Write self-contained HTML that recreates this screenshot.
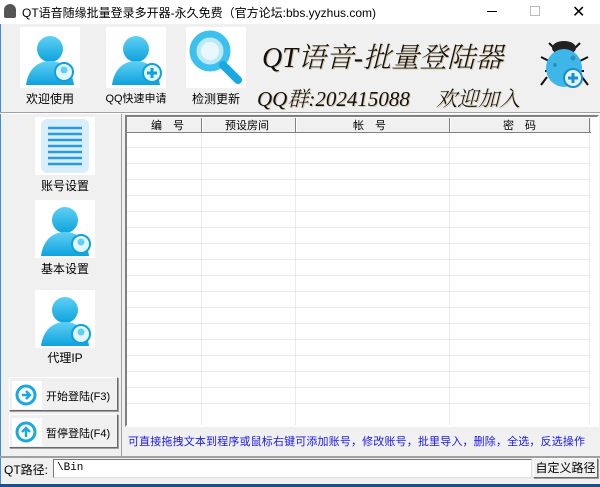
<!DOCTYPE html><html><head><meta charset="utf-8"><style>
*{margin:0;padding:0;box-sizing:border-box}
body{width:600px;height:487px;background:#f0f0f0;font-family:"Liberation Sans","Noto Sans CJK SC",sans-serif;font-size:12px;position:relative;overflow:hidden;color:#000}
.a{position:absolute}
.box{position:absolute;background:#fff}
.lbl{position:absolute;font-size:12px;text-align:center;white-space:nowrap}
.grid{position:absolute;left:125px;top:115px;width:474px;height:312px;background:#fff;border:2px solid #a0a0a0;border-right-color:#fff;border-bottom-color:#fff;border-top-color:#808080;border-left-color:#808080}
.btn{position:absolute;background:#f0f0f0;border:1px solid #fff;border-right-color:#6a6a6a;border-bottom-color:#6a6a6a;box-shadow:1px 1px 0 #a0a0a0}
.big{font-family:'Liberation Serif','Noto Serif CJK SC',serif;font-style:italic;font-weight:300;color:#111;text-shadow:1px 1px 0 rgba(200,160,96,.5);white-space:nowrap}
</style></head><body>
<svg width="0" height="0" style="position:absolute"><defs>
<linearGradient id="g" x1="0" y1="0" x2="0" y2="1"><stop offset="0" stop-color="#5fd0f5"/><stop offset="1" stop-color="#0ea2dc"/></linearGradient>
<g id="person"><circle cx="28" cy="20" r="13" fill="url(#g)"/><path d="M4 56 C6 40 16 32 28 32 C40 32 50 40 52 56 Z" fill="url(#g)"/></g>
</defs></svg>
<div class="a" style="left:0;top:0;width:600px;height:24px;background:#fff"></div>
<div class="a" style="left:4px;top:4px;width:12px;height:14px;background:#555;border-radius:6px 6px 2px 2px"></div>
<div class="a" style="left:22px;top:4px;font-size:12px">QT语音随缘批量登录多开器-永久免费（官方论坛:bbs.yyzhus.com)</div>
<div class="a" style="left:487px;top:11px;width:10px;height:1px;background:#000"></div>
<div class="a" style="left:530px;top:6px;width:10px;height:10px;border:1px solid #bbb"></div>
<div class="a" style="left:572px;top:2px;font-size:16px;font-weight:300">✕</div>
<div class="a" style="left:0;top:24px;width:1px;height:460px;background:#3c8ed8"></div>
<div class="a" style="left:0;top:484px;width:600px;height:3px;background:#1b4f8a"></div>
<div class="box" style="left:20px;top:27px;width:60px;height:61px"><svg width="60" height="61"><use href="#person" x="2" y="2"/><circle cx="44" cy="45" r="9" fill="#e4f4fc" stroke="#0ea2dc" stroke-width="2"/><circle cx="44" cy="43" r="3.5" fill="#5fd0f5"/></svg></div>
<div class="lbl" style="left:20px;top:90px;width:60px">欢迎使用</div>
<div class="box" style="left:106px;top:27px;width:60px;height:61px"><svg width="60" height="61"><use href="#person" x="2" y="2"/><circle cx="46" cy="46" r="9" fill="#e4f4fc" stroke="#0ea2dc" stroke-width="2"/><path d="M46 41v10M41 46h10" stroke="#0ea2dc" stroke-width="3"/></svg></div>
<div class="lbl" style="left:101px;top:90px;width:70px;font-size:11px">QQ快速申请</div>
<div class="box" style="left:186px;top:27px;width:60px;height:61px"><svg width="60" height="61"><circle cx="24" cy="24" r="17" fill="#bdeaf9" stroke="#3ec0ee" stroke-width="7"/><circle cx="24" cy="24" r="9" fill="#e9f8fe"/><path d="M37 38 L52 53" stroke="#1aa8e0" stroke-width="8" stroke-linecap="round"/></svg></div>
<div class="lbl" style="left:186px;top:90px;width:60px">检测更新</div>
<div class="a big" style="left:262px;top:36px;font-size:28px">QT语音-批量登陆器</div>
<div class="a big" style="left:257px;top:83px;font-size:21px">QQ群:202415088　 欢迎加入</div>
<svg class="a" style="left:537px;top:35px" width="55" height="55"><g stroke="#111" stroke-width="2" fill="none"><path d="M12 8l6 6M43 8l-6 6M4 22l8 4M51 22l-8 4M4 50l6-8M51 50l-6-8M8 36h4M47 36h-4"/></g><ellipse cx="27" cy="13" rx="12" ry="7" fill="#222"/><ellipse cx="27" cy="33" rx="18" ry="19" fill="#3fb6e8"/><circle cx="18" cy="30" r="2" fill="#2a8fc0"/><circle cx="36" cy="23" r="2.5" fill="#2a8fc0"/><circle cx="36" cy="43" r="9" fill="#e4f4fc" stroke="#1a8ec8" stroke-width="2"/><path d="M36 38v10M31 43h10" stroke="#1a8ec8" stroke-width="3"/></svg>
<div class="a" style="left:0;top:112px;width:600px;height:1px;background:#a0a0a0"></div>
<div class="a" style="left:0;top:113px;width:600px;height:1px;background:#fff"></div>
<div class="a" style="left:121px;top:114px;width:1px;height:342px;background:#a0a0a0"></div>
<div class="box" style="left:35px;top:117px;width:60px;height:58px"><svg width="60" height="58"><rect x="6" y="2" width="48" height="54" rx="6" fill="#d8eefa"/><g stroke="#2a9bd8" stroke-width="2.5"><path d="M13 11h34M13 17h34M13 23h34M13 29h34M13 35h34M13 41h34M13 47h34"/></g></svg></div>
<div class="lbl" style="left:35px;top:177px;width:60px">账号设置</div>
<div class="box" style="left:35px;top:200px;width:60px;height:58px"><svg width="60" height="58"><use href="#person" x="2" y="0"/><circle cx="46" cy="44" r="9" fill="#e4f4fc" stroke="#0ea2dc" stroke-width="2"/><circle cx="46" cy="42" r="3.5" fill="#5fd0f5"/></svg></div>
<div class="lbl" style="left:35px;top:260px;width:60px">基本设置</div>
<div class="box" style="left:35px;top:290px;width:60px;height:58px"><svg width="60" height="58"><use href="#person" x="2" y="0"/><circle cx="46" cy="44" r="9" fill="#e4f4fc" stroke="#0ea2dc" stroke-width="2"/><circle cx="46" cy="42" r="3.5" fill="#5fd0f5"/></svg></div>
<div class="lbl" style="left:35px;top:349px;width:60px">代理IP</div>
<div class="btn" style="left:9px;top:377px;width:109px;height:34px"><svg class="a" style="left:2px;top:3px" width="30" height="28"><rect width="30" height="28" fill="#fff"/><circle cx="14" cy="14" r="9" fill="#fff" stroke="#1aa8e0" stroke-width="3"/><path d="M10 14h8M14 10l4 4-4 4" stroke="#1aa8e0" stroke-width="2.5" fill="none"/></svg><span class="a" style="left:36px;top:10px;font-size:11px">开始登陆(F3)</span></div>
<div class="btn" style="left:9px;top:414px;width:109px;height:34px"><svg class="a" style="left:2px;top:3px" width="30" height="28"><rect width="30" height="28" fill="#fff"/><circle cx="14" cy="14" r="9" fill="#fff" stroke="#1aa8e0" stroke-width="3"/><path d="M14 19v-9M10 14l4-4 4 4" stroke="#1aa8e0" stroke-width="2.5" fill="none"/></svg><span class="a" style="left:36px;top:10px;font-size:11px">暂停登陆(F4)</span></div>
<div class="grid">
<svg width="470" height="308" class="a" style="left:0;top:0">
<rect x="0" y="0" width="464" height="15" fill="#f0f0f0"/>
<g stroke="#eaeaea"><path d="M0 30.5h464M0 46.5h464M0 62.5h464M0 78.5h464M0 94.5h464M0 110.5h464M0 126.5h464M0 142.5h464M0 158.5h464M0 174.5h464M0 190.5h464M0 206.5h464M0 222.5h464M0 238.5h464M0 254.5h464M0 270.5h464M0 286.5h464M74.5 15v293M168.5 15v293M322.5 15v293M462.5 15v293"/></g>
<g stroke="#808080"><path d="M0 15.5h464M74.5 0v15M168.5 0v15M322.5 0v15M462.5 0v15"/></g>
<g stroke="#fff"><path d="M0 .5h464M75.5 0v15M169.5 0v15M323.5 0v15"/></g>
</svg>
<div class="a" style="left:24px;top:0;font-size:11px">编　号</div>
<div class="a" style="left:98px;top:0;font-size:11px">预设房间</div>
<div class="a" style="left:226px;top:0;font-size:11px">帐　号</div>
<div class="a" style="left:376px;top:0;font-size:11px">密　码</div>
</div>
<div class="a" style="left:128px;top:433px;color:#1a1aee;font-size:11px;letter-spacing:0.15px;white-space:nowrap">可直接拖拽文本到程序或鼠标右键可添加账号，修改账号，批里导入，删除，全选，反选操作</div>
<div class="a" style="left:0;top:456px;width:600px;height:2px;background:#a0a0a0"></div>
<div class="a" style="left:4px;top:461px">QT路径:</div>
<div class="a" style="left:53px;top:459px;width:479px;height:19px;background:#fff;border:1px solid #7a7a7a;border-right-color:#ddd;border-bottom-color:#ddd;padding:2px 3px;font-family:'Liberation Mono',monospace;font-size:11px">\Bin</div>
<div class="btn" style="left:533px;top:458px;width:65px;height:20px;font-size:12px;text-align:center;line-height:18px">自定义路径</div>
</body></html>
